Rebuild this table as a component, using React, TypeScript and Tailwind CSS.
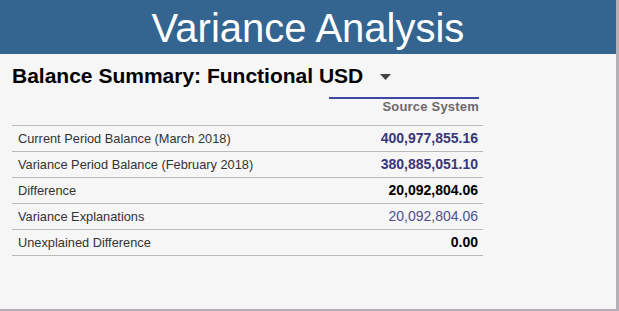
import React from 'react';

type Row = { label: string; value: string; tone: 'indigo' | 'black' | 'light' };

const rows: Row[] = [
  { label: 'Current Period Balance (March 2018)', value: '400,977,855.16', tone: 'indigo' },
  { label: 'Variance Period Balance (February 2018)', value: '380,885,051.10', tone: 'indigo' },
  { label: 'Difference', value: '20,092,804.06', tone: 'black' },
  { label: 'Variance Explanations', value: '20,092,804.06', tone: 'light' },
  { label: 'Unexplained Difference', value: '0.00', tone: 'black' },
];

function valueClass(tone: Row['tone']) {
  if (tone === 'indigo') return 'font-bold text-[#37377a]';
  if (tone === 'light') return 'font-normal text-[#4f4f8e]';
  return 'font-bold text-black';
}

export default function App() {
  return (
    <div
      className="w-[619px] h-[311px] overflow-hidden bg-[#f6f6f6]"
      style={{ fontFamily: '"Liberation Sans", Arial, sans-serif' }}
    >
      <div className="h-[311px] flex flex-col border-r-[3px] border-b-[2px] border-[#b4afb7]">
        <header className="h-[54px] shrink-0 bg-[#336590] flex items-center justify-center">
          <h1 className="text-[40px] leading-none text-white font-normal pt-[1px]">Variance Analysis</h1>
        </header>

        <div className="pl-[12px] pt-[10px]">
          <div className="flex items-center h-[24px]">
            <h2 className="text-[21px] leading-[24px] font-bold text-black">Balance Summary: Functional USD</h2>
            <svg width="11" height="6" viewBox="0 0 11 6" className="ml-[17px] mt-[2px]">
              <path d="M0 0 L11 0 L5.5 6 Z" fill="#444" />
            </svg>
          </div>

          <div className="w-[471px] mt-[9px]">
            <div className="flex justify-end">
              <div className="w-[150px] mr-[4px] border-t-2 border-[#4048a6] pb-[10px] text-right text-[13px] leading-[16px] font-bold text-[#6d696e] tracking-[0.2px]">
                Source System
              </div>
            </div>
            {rows.map((r, i) => (
              <div
                key={r.label}
                className={
                  'h-[26px] flex items-center justify-between border-t border-[#b9b9b9] pl-[6px] pr-[5px]' +
                  (i === rows.length - 1 ? ' border-b h-[27px]' : '')
                }
              >
                <span className="text-[12.8px] text-[#333333]">{r.label}</span>
                <span className={'text-[14px] ' + valueClass(r.tone)}>{r.value}</span>
              </div>
            ))}
          </div>
        </div>
      </div>
    </div>
  );
}
